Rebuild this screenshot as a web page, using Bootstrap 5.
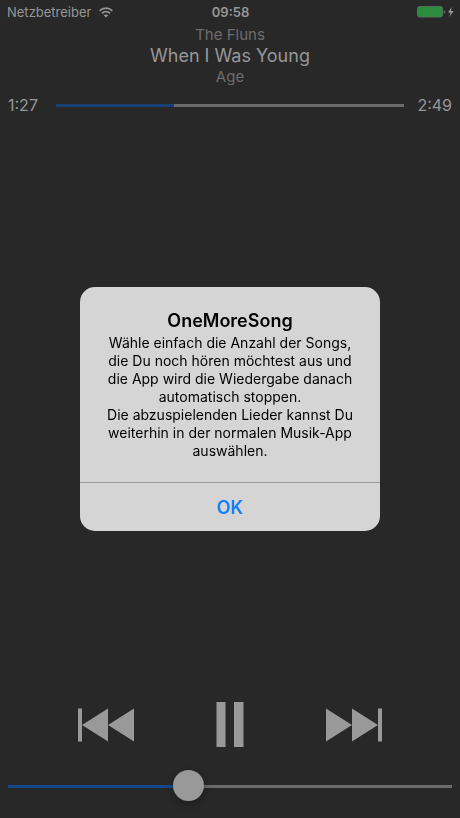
<!DOCTYPE html>
<html lang="de">
<head>
<meta charset="utf-8">
<meta name="viewport" content="width=device-width, initial-scale=1">
<title>OneMoreSong</title>
<link href="https://cdn.jsdelivr.net/npm/bootstrap@5.3.0/dist/css/bootstrap.min.css" rel="stylesheet">
<style>
  body { background: #282828; color: #979797; font-family: Inter, "Liberation Sans", sans-serif; }
  .status-bar { height: 24px; font-size: 13px; line-height: 24px; padding: 0 6px 0 7px; }
  .status-side { flex: 1 1 0; }
  .song-info { line-height: 21px; }
  .song-sub { font-size: 15px; color: #6d6d6d; }
  .song-title { font-size: 18px; margin: 0; font-weight: 400; line-height: 21px; }
  .seek-row { padding: 0 8px; margin-top: 8px; font-size: 16px; line-height: 20px; gap: 16px; }
  .seek-time { width: 32px; }
  .slider { appearance: none; -webkit-appearance: none; display: block; width: 100%; margin: 0; background: transparent; --done: #174073; }
  .slider::-webkit-slider-runnable-track { height: 3px; background: linear-gradient(to right, var(--done) var(--fill), #6b6b6b var(--fill)); }
  .slider::-webkit-slider-thumb { -webkit-appearance: none; width: 31px; height: 31px; margin-top: -15px; border-radius: 50%; background: #999; box-shadow: 0 3px 8px rgba(0, 0, 0, .3); }
  .seek::-webkit-slider-thumb { width: 1px; height: 3px; margin-top: 0; opacity: 0; }
  .volume { --done: #14488a; height: 32px; }
  .transport { padding: 0 78px; }
  .transport .btn { color: #999; line-height: 0; }
  .volume-row { padding: 23px 8px 16px; }
  .alert-dialog { max-width: 300px; margin: 0 auto; min-height: 100%; }
  .alert-box { background: #d5d5d5; color: #000; border-radius: 15px; overflow: hidden; }
  .alert-text { padding: 22px 20px; font-size: 14px; line-height: 18px; }
  .alert-title { font-size: 18px; line-height: 24px; margin: 0 0 1px; font-weight: 600; }
  .alert-ok { border-top: 1px solid #999; height: 49px; font-size: 18px; font-weight: 600; color: #147efb; }
</style>
<script src="https://cdn.jsdelivr.net/npm/bootstrap@5.3.0/dist/js/bootstrap.bundle.min.js"></script>
</head>
<body>
<div class="d-flex flex-column min-vh-100">
  <header>
    <div class="status-bar d-flex align-items-center">
      <div class="status-side d-flex align-items-center gap-2">
        <span>Netzbetreiber</span>
        <svg width="14" height="11" viewBox="0 0 14 11" fill="none" stroke="currentColor" stroke-width="1.8" aria-hidden="true"><path d="M.6 3.8C4.2.2 9.8.2 13.4 3.8M3 6.3c2.3-2.2 5.7-2.2 8 0"/><path d="M7 10.6 4.700 8.300c1.2-1.200 3.400-1.200 4.600 0z" fill="currentColor" stroke="none"/></svg>
      </div>
      <span class="fw-semibold">09:58</span>
      <div class="status-side d-flex justify-content-end align-items-center">
        <svg width="37" height="12" viewBox="0 0 37 12" aria-hidden="true"><rect x=".5" y=".5" width="25" height="10.5" rx="2" fill="#2b8c3e" stroke="#56705a"/><path d="M26.8 4v4c1.5-.4 1.5-3.6 0-4z" fill="#777"/><path d="M34.6 1 31 6.5h2.6L32.2 11l4.6-6h-2.7z" fill="#999"/></svg>
      </div>
    </div>
    <div class="song-info text-center">
      <div class="song-sub">The Fluns</div>
      <h1 class="song-title">When I Was Young</h1>
      <div class="song-sub">Age</div>
    </div>
    <div class="seek-row d-flex align-items-center">
      <span class="seek-time flex-shrink-0">1:27</span>
      <input class="slider seek" type="range" min="0" max="100" value="34" style="--fill:34%" aria-label="Position">
      <span class="seek-time flex-shrink-0 d-flex justify-content-end">2:49</span>
    </div>
  </header>
  <footer class="mt-auto">
    <div class="transport d-flex justify-content-between align-items-center">
      <button class="btn border-0 p-0" type="button" aria-label="Zurück"><svg width="56" height="34" viewBox="0 0 56 34" fill="currentColor"><path d="M0 .5h4v33H0zM4 17 30 .5V17L56 .5v33L30 17v16.5z"/></svg></button>
      <button class="btn border-0 p-0" type="button" aria-label="Pause"><svg width="28" height="45" viewBox="0 0 28 45" fill="currentColor"><path d="M.5 0h9v45h-9zM18 0h9.500v45H18z"/></svg></button>
      <button class="btn border-0 p-0" type="button" aria-label="Weiter"><svg width="56" height="34" viewBox="0 0 56 34" fill="currentColor"><path d="M52 .5h4v33h-4zM52 17 26 .5V17L0 .5v33L26 17v16.5z"/></svg></button>
    </div>
    <div class="volume-row">
      <input class="slider volume" type="range" min="0" max="100" value="40" style="--fill:40%" aria-label="Lautstärke">
    </div>
  </footer>
</div>
<div class="modal d-block" tabindex="-1" role="dialog" aria-modal="true" aria-labelledby="alertTitle">
  <div class="modal-dialog modal-dialog-centered alert-dialog">
    <div class="modal-content border-0 alert-box text-center">
      <div class="alert-text">
        <h2 class="alert-title" id="alertTitle">OneMoreSong</h2>
        <p class="mb-0">Wähle einfach die Anzahl der Songs, die Du noch hören möchtest aus und die App wird die Wiedergabe danach automatisch stoppen.<br>Die abzuspielenden Lieder kannst Du weiterhin in der normalen Musik-App auswählen.</p>
      </div>
      <button class="btn alert-ok rounded-0 border-start-0 border-end-0 border-bottom-0 p-0" type="button">OK</button>
    </div>
  </div>
</div>
</body>
</html>
